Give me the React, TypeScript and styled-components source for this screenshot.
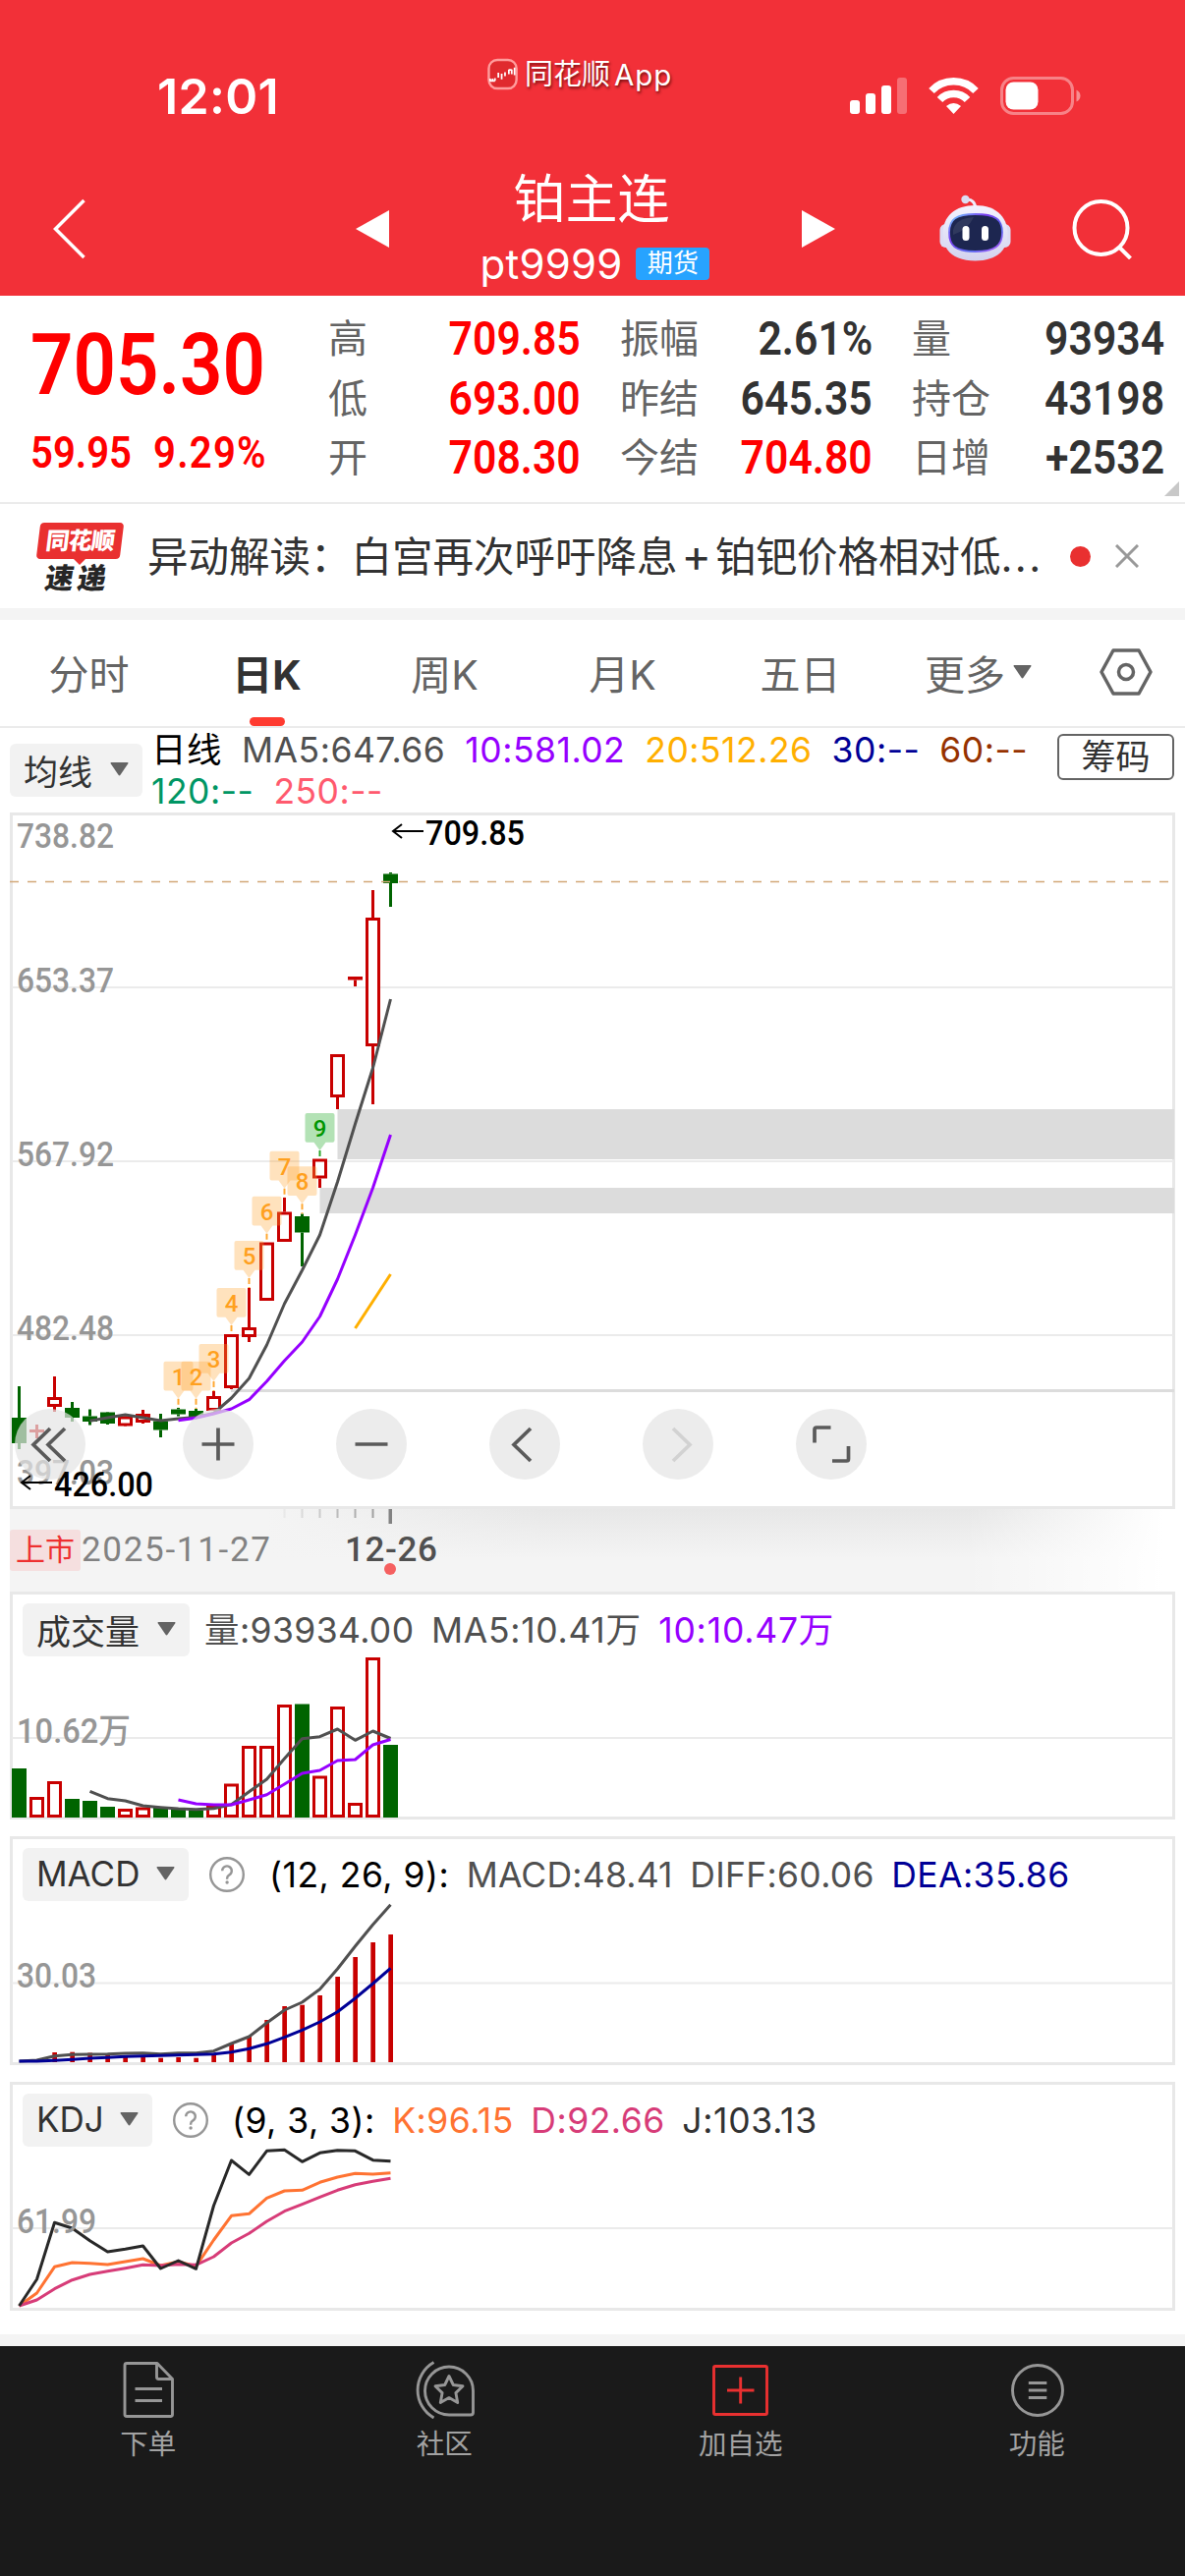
import React from 'react';
import styled, { createGlobalStyle, css } from 'styled-components';

const SANS = `Inter, "Noto Sans CJK SC", sans-serif`;
const DIN = `Roboto, "Noto Sans CJK SC", sans-serif`;
const RED = '#c80000';
const GREEN = '#006400';

const Global = createGlobalStyle`
  html, body { margin: 0; padding: 0; background: #fff; }
  body { font-family: ${SANS}; }
  * { box-sizing: border-box; }
`;

const Screen = styled.div`
  width: 1206px;
  height: 2622px;
  display: flex;
  flex-direction: column;
  background: #fff;
  overflow: hidden;
  white-space: nowrap;
`;

/* ---------- header ---------- */

const Header = styled.header`
  height: 301px;
  flex: none;
  background: #f23038;
  color: #fff;
`;

const StatusBar = styled.div`
  height: 164px;
  display: grid;
  grid-template-columns: 496px 188px 1fr;
  align-items: start;
`;

const Clock = styled.div`
  padding: 73px 0 0 160px;
  font-size: 50px;
  line-height: 50px;
  font-weight: 600;
  letter-spacing: 0.3px;
`;

const AppMark = styled.div`
  display: flex;
  align-items: center;
  gap: 7px;
  padding-top: 58px;
  font-size: 29px;
  line-height: 36px;
  text-shadow: 1px 2px 3px rgba(70, 0, 0, 0.75);
`;

const AppLatin = styled.span`
  margin-left: -3px;
  font-size: 29.5px;
  letter-spacing: 0.8px;
`;

const StatusIcons = styled.div`
  display: flex;
  align-items: center;
  gap: 22px;
  padding: 78px 0 0 181px;
`;

const NavBar = styled.div`
  height: 137px;
  display: grid;
  grid-template-columns: 362px 34px 414px 40px 1fr;
  align-items: center;
`;

const NavBack = styled.div`
  padding-left: 53px;
  line-height: 0;
`;

const NavArrow = styled.div`
  line-height: 0;
  justify-self: end;
`;

const NavTitle = styled.div`
  display: flex;
  flex-direction: column;
  align-items: center;
`;

const TitleText = styled.div`
  font-size: 53px;
  line-height: 70px;
  padding-right: 2px;
  font-weight: 400;
`;

const TitleSub = styled.div`
  display: flex;
  align-items: center;
  gap: 14px;
  padding: 2px 0 0 5px;
  font-size: 42px;
  line-height: 58px;
  letter-spacing: 0.2px;
`;

const MarketTag = styled.span`
  width: 75px;
  height: 33px;
  border-radius: 4px;
  background: #27a3ff;
  font-size: 26px;
  line-height: 32px;
  text-align: center;
`;

const NavActions = styled.div`
  display: flex;
  align-items: center;
  gap: 61px;
  padding-left: 105px;
`;

/* ---------- quote ---------- */

const Quote = styled.section`
  height: 212px;
  flex: none;
  display: flex;
  border-bottom: 2px solid #ebebeb;
  position: relative;
`;

const Num = styled.span<{ $color?: string; $origin?: string; $track?: number }>`
  display: inline-block;
  font-family: ${DIN};
  font-weight: 600;
  letter-spacing: ${p => p.$track ?? 0}px;
  color: ${p => p.$color ?? '#323232'};
  transform: scaleX(0.89);
  transform-origin: ${p => p.$origin ?? 'right'} center;
`;

const PriceBlock = styled.div`
  width: 334px;
  padding: 22px 0 0 31px;
`;

const Price = styled(Num)`
  display: block;
  font-size: 87px;
  line-height: 96px;
  transform: scaleX(0.875);
`;

const Changes = styled.div`
  display: flex;
  gap: 9px;
  margin-top: 15px;
  font-size: 45px;
  line-height: 54px;
`;

const Stats = styled.div`
  flex: 1;
  display: grid;
  grid-template-columns: repeat(3, 257px);
  grid-auto-rows: 60.5px;
  column-gap: 40px;
  padding-top: 14px;
`;

const Stat = styled.div`
  display: flex;
  justify-content: space-between;
  align-items: center;
  font-size: 48px;
  line-height: 60px;
`;

const StatLabel = styled.span`
  font-size: 40px;
  color: #646464;
`;

const Corner = styled.svg`
  position: absolute;
  right: 6px;
  bottom: 6px;
`;

/* ---------- news ---------- */

const News = styled.section`
  height: 106px;
  flex: none;
  display: flex;
  align-items: center;
`;

const NewsLogo = styled.div`
  width: 88px;
  margin: 2px 25px 0 37px;
  display: flex;
  flex-direction: column;
  align-items: center;
`;

const LogoTop = styled.div`
  width: 85px;
  height: 37px;
  border-radius: 4px;
  background: #e93030;
  color: #fff;
  font-size: 24px;
  line-height: 37px;
  font-weight: 900;
  letter-spacing: -0.8px;
  text-align: center;
  transform: skewX(-7deg);
`;

const LogoPointer = styled.div`
  border: 6px solid transparent;
  border-top-color: #e93030;
  border-bottom: 0;
`;

const LogoBottom = styled.div`
  font-size: 29px;
  line-height: 28px;
  font-weight: 900;
  color: #262626;
  letter-spacing: 4px;
  margin-right: 4px;
  transform: skewX(-9deg);
`;

const NewsText = styled.div`
  width: 912px;
  font-size: 41.5px;
  color: #323232;
  line-height: 60px;
`;

const Plus = styled.span`
  padding: 0 4px 0 4px;
  font-size: 46px;
`;

const Ellipsis = styled.span`
  letter-spacing: 2.4px;
`;

const Dot = styled.i`
  width: 21px;
  height: 21px;
  border-radius: 50%;
  background: #e93030;
  margin: 0 25px 0 27px;
`;

const Strip = styled.div`
  height: 12px;
  flex: none;
  background: #f4f4f4;
`;

/* ---------- tabs ---------- */

const Tabs = styled.nav`
  height: 110px;
  flex: none;
  display: grid;
  grid-template-columns: repeat(6, 181px) 120px;
  border-bottom: 2px solid #ebebeb;
`;

const Tab = styled.div<{ $active?: boolean }>`
  display: flex;
  align-items: center;
  justify-content: center;
  gap: 8px;
  padding-bottom: 2px;
  position: relative;
  font-size: 41px;
  color: #646464;
  ${p => p.$active && css`
    color: #323232;
    font-weight: 700;
    &::after {
      content: '';
      position: absolute;
      bottom: 0;
      width: 36px;
      height: 9px;
      border-radius: 5px;
      background: #ff3b30;
    }
  `}
`;

/* ---------- moving averages ---------- */

const Averages = styled.section`
  height: 86px;
  flex: none;
  display: flex;
  align-items: flex-start;
  padding: 0 11px 0 10px;
`;

const Picker = styled.div<{ $w: number }>`
  width: ${p => p.$w}px;
  height: 54px;
  flex: none;
  display: flex;
  align-items: center;
  justify-content: space-between;
  padding: 0 14px 2px 14px;
  border-radius: 6px;
  background: #f2f2f2;
  font-size: 35px;
  color: #323232;
`;

const PickerSlot = styled.div`
  padding-top: 16px;
`;

const AverageList = styled.div`
  flex: 1;
  display: flex;
  flex-wrap: wrap;
  column-gap: 20px;
  padding: 2px 0 0 9px;
`;

const Value = styled.span<{ $color: string; $track?: number }>`
  color: ${p => p.$color};
  font-size: 35.5px;
  line-height: 42px;
  letter-spacing: ${p => p.$track ?? 0.5}px;
`;

const ChipButton = styled.div`
  width: 119px;
  height: 47px;
  margin-top: 6px;
  border: 2px solid #646464;
  border-radius: 6px;
  font-size: 35px;
  line-height: 42px;
  text-align: center;
  color: #323232;
`;

/* ---------- charts ---------- */

const Panel = styled.section<{ $h: number; $gap?: number }>`
  height: ${p => p.$h}px;
  flex: none;
  display: grid;
  margin: ${p => p.$gap ?? 0}px 10px 0;
  border: 3px solid #e8e8e8;
  position: relative;
`;

const Plot = styled.svg`
  grid-area: 1 / 1;
  display: block;
  margin: -3px;
  font-family: ${DIN};
  font-weight: 500;
`;

const PanelHead = styled.div`
  grid-area: 1 / 1;
  align-self: start;
  z-index: 1;
  display: flex;
  align-items: center;
  padding: 9px 0 0 10px;
`;

const Help = styled.svg`
  flex: none;
  margin: 0 23px 0 20px;
`;

const Values = styled.div<{ $left?: number }>`
  display: flex;
  gap: 17.5px;
  padding: 2px 0 0 ${p => p.$left ?? 0}px;
`;

const Toolbar = styled.div`
  position: absolute;
  left: 2px;
  top: 604px;
  display: flex;
  gap: 84px;
`;

const Round = styled.div`
  width: 72px;
  height: 72px;
  border-radius: 50%;
  background: rgba(228, 228, 228, 0.7);
  line-height: 0;
  &:first-child { margin-right: 15px; }
`;

const LowMark = styled.svg`
  position: absolute;
  left: 6px;
  top: 654px;
  font-family: ${DIN};
  font-weight: 500;
`;

const DateStrip = styled.div`
  height: 84px;
  flex: none;
  margin: 0 10px;
  display: flex;
  align-items: center;
  position: relative;
  background:
    linear-gradient(90deg, rgba(255,255,255,0) 0 82%, #fff 99%),
    linear-gradient(90deg, #f4f4f4 0 22%, rgba(244,244,244,0) 46%),
    linear-gradient(180deg, #e7e7e7 0%, #f4f4f4 60%);
  font-family: ${DIN};
`;

const ListTag = styled.span`
  width: 72px;
  height: 42px;
  border-radius: 3px;
  background: #f5dfdf;
  color: #ee3030;
  font-size: 30px;
  line-height: 42px;
  text-align: center;
`;

const StartDate = styled.span`
  width: 269px;
  padding: 0 0 2px 1px;
  font-size: 35px;
  color: #828282;
  letter-spacing: 1.7px;
`;

const EndDate = styled.span`
  padding-bottom: 2px;
  font-size: 35px;
  font-weight: 500;
  letter-spacing: 0.6px;
  color: #505050;
`;

const Ticks = styled.svg`
  position: absolute;
  left: 0;
  top: 0;
`;

/* ---------- bottom bar ---------- */

const Spacer = styled.div`
  flex: 1;
`;

const Footer = styled.footer`
  height: 234px;
  flex: none;
  display: grid;
  grid-template-columns: repeat(4, 301.5px);
  align-items: start;
  padding-top: 12px;
  background: #1a1a1a;
`;

const FootItem = styled.div`
  display: flex;
  flex-direction: column;
  align-items: center;
  gap: 5px;
  font-size: 28.5px;
  line-height: 42px;
  color: #a2a2a2;
`;

/* ---------- data ---------- */

const px = (i: number) => 19.5 + 18 * i;

type Candle = [up: number, high: number, top: number, bottom: number, low: number];

const CANDLES: Candle[] = [
  [0, 1411, 1443, 1469, 1475], [1, 1450, 1455, 1458, 1464], [1, 1401, 1422, 1432, 1437],
  [0, 1427, 1433, 1443, 1447], [0, 1434.5, 1441.5, 1447, 1450.5], [0, 1437, 1437.5, 1449, 1450],
  [1, 1441, 1441.5, 1451.5, 1452], [1, 1435, 1439, 1448, 1449], [0, 1439, 1446.5, 1455.5, 1463],
  [0, 1433, 1434.5, 1439.5, 1441.5], [0, 1434, 1436, 1443, 1443], [1, 1416, 1421, 1436, 1436],
  [1, 1358, 1358, 1413, 1414], [1, 1311, 1351, 1361, 1366], [1, 1264.5, 1264.5, 1324, 1324],
  [1, 1219, 1233.5, 1264, 1264], [0, 1235.5, 1238, 1254.5, 1289], [1, 1179.5, 1179.5, 1199.5, 1209],
  [1, 1073, 1073, 1117, 1129], [1, 994, 994, 997.5, 1004], [1, 906, 934, 1065, 1124], [0, 888, 889.5, 899, 923],
];

const MA5 = [1446.3, 1443, 1440, 1443, 1446, 1444, 1442.5, 1438.5, 1423, 1403, 1369, 1327, 1293, 1257, 1203, 1144, 1087, 1017];
const MA10 = [1445.7, 1443.3, 1439, 1434, 1424.7, 1406, 1385, 1366, 1340, 1302, 1257, 1209, 1155];

const VOL = [1800, 1829, 1813, 1831, 1833, 1839, 1841, 1839.5, 1840, 1840, 1842.5, 1837, 1815.5, 1777, 1777, 1735, 1734.5, 1807.5, 1737, 1835, 1687, 1776];
const VOL5 = [1823.3, 1830.7, 1833, 1838, 1839.7, 1841, 1841.7, 1840.7, 1836.7, 1823.7, 1811, 1790, 1769.7, 1767.7, 1760, 1771.3, 1762, 1769.5];
const VOL10 = [1832, 1836, 1837, 1837, 1832, 1826.7, 1816, 1805, 1802, 1792, 1791, 1776, 1770.5];

const HIST = [2098, 2098, 2089, 2088.7, 2089.5, 2092, 2092, 2092.7, 2094.7, 2094, 2094.7, 2091, 2080, 2073, 2056, 2042, 2040.7, 2031, 2012, 1992, 1977, 1969];
const DIFF = [2098, 2097, 2092.7, 2091.2, 2091, 2090.7, 2090, 2089.7, 2090.7, 2089.7, 2089.7, 2087.7, 2080, 2073, 2059, 2046, 2038, 2024.7, 2004, 1981, 1959, 1938.7];
const DEA = [2098, 2098, 2097.3, 2096.3, 2095, 2094.3, 2093.3, 2092.7, 2092.3, 2091.7, 2091.3, 2090.7, 2088.7, 2085.3, 2080.3, 2073.7, 2066.3, 2058, 2047.7, 2034, 2019, 2003.3];

const J = [2347, 2320, 2262.3, 2268, 2280.7, 2292, 2289.3, 2286, 2309, 2301, 2309.3, 2245, 2199, 2213.3, 2189.3, 2188.3, 2200.3, 2191.3, 2188.7, 2189.3, 2198.7, 2199.7];
const K = [2347, 2334, 2307.3, 2303, 2303.7, 2305, 2302, 2299, 2306, 2302, 2306.7, 2280, 2255.3, 2253.3, 2237.3, 2230, 2229.3, 2221.3, 2216, 2212.3, 2213, 2211.7];
const D = [2347, 2341, 2329.7, 2320.7, 2315, 2311.7, 2308.7, 2305.3, 2306, 2304.7, 2305.3, 2297, 2283, 2273.3, 2261, 2250.7, 2243.7, 2236.3, 2229.3, 2223.7, 2220.3, 2217.3];

const BADGES = [
  { n: 1, i: 9, y: 1385.7 }, { n: 2, i: 10, y: 1385.7 }, { n: 3, i: 11, y: 1368 },
  { n: 4, i: 12, y: 1311 }, { n: 5, i: 13, y: 1263 }, { n: 6, i: 14, y: 1217.7 },
  { n: 7, i: 15, y: 1171.7 }, { n: 8, i: 16, y: 1187.3 }, { n: 9, i: 17, y: 1133 },
];

/* ---------- drawing helpers ---------- */

const Line = ({ data, from = 0, color }: { data: number[]; from?: number; color: string }) => (
  <polyline
    points={data.map((y, k) => `${px(k + from)},${y}`).join(' ')}
    fill="none" stroke={color} strokeWidth={3} strokeLinejoin="round"
  />
);

const Grid = ({ y }: { y: number }) => <rect x={12} y={y - 1} width={1182} height={2} fill="#ebebeb" />;

const Axis = ({ y, w, children }: { y: number; w: number; children: string }) => (
  <text x={17} y={y} fontSize={35.5} fill="#969696" textLength={w} lengthAdjust="spacingAndGlyphs">{children}</text>
);

const Caret = ({ color = '#646464' }: { color?: string }) => (
  <svg width="19" height="14" viewBox="0 0 19 14"><path d="M1.2 0h16.600q1.200 0 .5 1.200L10.500 12.800q-1 1.400-2 0L.7 1.200Q0 0 1.200 0z" fill={color} /></svg>
);

const CandleShape = ({ c, i }: { c: Candle; i: number }) => {
  const [up, high, top, bottom, low] = c;
  const x = px(i);
  const color = up ? RED : GREEN;
  return (
    <g fill={color}>
      <rect x={x - 1.5} y={high} width={3} height={Math.max(0, top - high)} />
      <rect x={x - 1.5} y={bottom} width={3} height={Math.max(0, low - bottom)} />
      {up && bottom - top > 5
        ? <rect x={x - 6} y={top + 1.5} width={12} height={bottom - top - 3} fill="#fff" stroke={color} strokeWidth={3} />
        : <rect x={x - 7.5} y={top} width={15} height={bottom - top} />}
    </g>
  );
};

const Badge = ({ n, i, y }: { n: number; i: number; y: number }) => {
  const x = px(i);
  const hot = n === 9;
  return (
    <g>
      <line x1={x} x2={x} y1={y + 38} y2={Math.max(y + 38, CANDLES[i][1])} stroke={hot ? '#2ba52b' : '#ffa832'} strokeWidth={2} strokeDasharray="6 3" />
      <path
        d={`M${x - 13} ${y}h26a2 2 0 0 1 2 2v25.700a2 2 0 0 1-2 2h-7L${x} ${y + 38}L${x - 6} ${y + 29.7}h-7a2 2 0 0 1-2-2V${y + 2}a2 2 0 0 1 2-2z`}
        fill={hot ? '#b3e2b5' : 'rgba(255,165,50,0.32)'}
      />
      <text x={x} y={y + 24} fontSize={24} textAnchor="middle" fill={hot ? '#009600' : '#ffa01e'}>{n}</text>
    </g>
  );
};

const Arrow = ({ x, y }: { x: number; y: number }) => (
  <path d={`M${x} ${y}h31M${x + 9} ${y - 7}L${x} ${y}l9 7`} fill="none" stroke="#000" strokeWidth={2} />
);

const HelpIcon = () => (
  <Help width="38" height="38" viewBox="0 0 38 38">
    <circle cx="19" cy="19" r="16.800" fill="none" stroke="#969696" strokeWidth="2.400" />
    <path d="M14.2 15.200a4.800 4.800 0 1 1 7.200 4.200q-2.300 1.300-2.300 3.600v.8" fill="none" stroke="#969696" strokeWidth="2.400" />
    <circle cx="19.100" cy="27" r="1.700" fill="#969696" />
  </Help>
);

const TOOLS: { d: string; color?: string }[] = [
  { d: 'M36 20L19 36.500L36 53M51 20L34 36.500L51 53' },
  { d: 'M19.500 36h33M36 19.500v33' },
  { d: 'M19.500 36h33' },
  { d: 'M42 20L25 36.500L42 53' },
  { d: 'M31 20L48 36.500L31 53', color: '#d2d2d2' },
  { d: 'M35.500 19H21q-2 0-2 2v13.500M37 53h14.500q2 0 2-2V38' },
];

const STATS: [string, string, string?][] = [
  ['高', '709.85', '#f00'], ['振幅', '2.61%'], ['量', '93934'],
  ['低', '693.00', '#f00'], ['昨结', '645.35'], ['持仓', '43198'],
  ['开', '708.30', '#f00'], ['今结', '704.80', '#f00'], ['日增', '+2532'],
];

const AVERAGES: [string, string][] = [
  ['日线', '#000'], ['MA5:647.66', '#505050'], ['10:581.02', '#9600ff'], ['20:512.26', '#ffaf00'],
  ['30:--', '#000096'], ['60:--', '#963200'], ['120:--', '#009664'], ['250:--', '#ff5a6e'],
];

const TABS = ['分时', '日K', '周K', '月K', '五日', '更多'];

const FOOT = [
  {
    label: '下单', color: '#969696',
    icon: <><path d="M9 5.500h31l15.500 16v36q0 2-2 2H9q-2 0-2-2v-50q0-2 2-2z" /><path d="M39.500 6v13.500q0 2 2 2h13.500M17.500 31.500h27.500M17.500 43.500h27.500" /></>,
  },
  {
    label: '社区', color: '#969696',
    icon: <><path d="M36 9A24.500 24.500 0 0 0 36 58H58q2.500 0 2.500-2.500V33.500A24.500 24.500 0 0 0 36 9z" /><path d="M20.500 4.500A32.500 32.500 0 0 0 20.500 61" /><path d="M36 18.500l4.300 9 9.700 1.300-7.100 6.800 1.800 9.900-8.700-4.900-8.700 4.900 1.800-9.900-7.100-6.800 9.700-1.300z" /></>,
  },
  {
    label: '加自选', color: '#e93030',
    icon: <><rect x="3.500" y="8.500" width="54" height="49" rx="1.500" /><path d="M17 33h27.500M30.700 19.500v27" /></>,
  },
  {
    label: '功能', color: '#969696',
    icon: <><circle cx="32" cy="33" r="25.500" /><path d="M22.800 25.500h18.500M22.800 33h18.500M22.800 40.500h18.500" /></>,
  },
];

/* ---------- icons in the header ---------- */

const Robot = () => (
  <svg width="75" height="70" viewBox="0 0 75 70">
    <defs>
      <linearGradient id="shell" x1="0" y1="0" x2="0" y2="1">
        <stop offset="0" stopColor="#f4f3ff" /><stop offset="1" stopColor="#d3d2ee" />
      </linearGradient>
      <linearGradient id="rim" x1="0" y1="0" x2="1" y2="1">
        <stop offset="0" stopColor="#6fd8ff" /><stop offset=".35" stopColor="#7a3cf0" /><stop offset=".7" stopColor="#5a6cf0" /><stop offset="1" stopColor="#c050ff" />
      </linearGradient>
    </defs>
    <path d="M28 5.500Q37 4 38 15" fill="none" stroke="#eeeefc" strokeWidth="3" />
    <circle cx="27.500" cy="5" r="4.200" fill="#dcdcf2" />
    <rect x="1.500" y="30" width="14" height="24" rx="6" fill="#dcdcf4" />
    <rect x="59.500" y="30" width="14" height="24" rx="6" fill="#dcdcf4" />
    <path d="M37.500 11C58 11 70.500 22 70.500 40S58 67.500 37.500 67.500 4.500 58 4.500 40 17 11 37.500 11z" fill="url(#shell)" />
    <path d="M37.500 20C58 20 65 25 65 38.500S58 58 37.500 58 11 52 11 38.500 18 20 37.500 20z" fill="#1d2650" stroke="url(#rim)" strokeWidth="1.800" />
    <path d="M15 36Q18 24 36 23Q30 36 15 41z" fill="#3d4668" opacity=".6" />
    <rect x="24.500" y="32" width="7" height="15" rx="3.500" fill="#fff" />
    <rect x="44" y="32" width="7" height="15" rx="3.500" fill="#fff" />
  </svg>
);

const StatusGlyphs = () => (
  <StatusIcons>
    <svg width="58" height="39" viewBox="0 0 58 39" fill="#fff">
      <rect x="0" y="24" width="10" height="14" rx="3" />
      <rect x="16" y="17" width="10" height="21" rx="3" />
      <rect x="32" y="9" width="10" height="29" rx="3" />
      <rect x="48" y="1" width="10" height="37" rx="3" opacity=".3" />
    </svg>
    <svg width="51" height="39" viewBox="0 0 51 39" fill="none" stroke="#fff" strokeWidth="7.500">
      <path d="M3 14.500Q12 4.800 25.500 4.800T48 14.500" />
      <path d="M11.500 23.500Q17 17.500 25.500 17.500T39.500 23.500" />
      <path d="M25.500 38l-7.500-8q7.500-6 15 0z" fill="#fff" stroke="none" />
    </svg>
    <svg width="82" height="39" viewBox="0 0 82 39">
      <rect x="1.500" y="1.500" width="72" height="36" rx="12" fill="none" stroke="#fff" strokeOpacity=".4" strokeWidth="3" />
      <rect x="5.500" y="5.500" width="33" height="28" rx="8" fill="#fff" />
      <path d="M77.500 13.500q4 2 4 6t-4 6z" fill="#fff" opacity=".45" />
    </svg>
  </StatusIcons>
);

/* ---------- screen ---------- */

export default function App() {
  return (
    <Screen>
      <Global />
      <Header>
        <StatusBar>
          <Clock>12:01</Clock>
          <AppMark>
            <svg width="32" height="34" viewBox="0 0 32 34">
              <rect x="1.500" y="1.500" width="29" height="30" rx="9" fill="#e02a2e" stroke="#ff9c9c" strokeWidth="2.500" />
              <path d="M3 21v3M5.500 21v3M8 20.500v3M11.500 15v5M15 16v6M18.500 14.500v4M22.500 11.500v5M25.500 11.500v5M28.500 9.500v8M3 23.500h5M22.500 12h3" stroke="#fff" strokeWidth="1.800" />
            </svg>
            同花顺<AppLatin>App</AppLatin>
          </AppMark>
          <StatusGlyphs />
        </StatusBar>
        <NavBar>
          <NavBack>
            <svg width="34" height="62" viewBox="0 0 34 62"><path d="M32.500 2L3.500 31l29 29" fill="none" stroke="#fff" strokeWidth="3.500" /></svg>
          </NavBack>
          <NavArrow><svg width="34" height="38" viewBox="0 0 34 38"><path d="M34 0v38L0 19z" fill="#fff" /></svg></NavArrow>
          <NavTitle>
            <TitleText>铂主连</TitleText>
            <TitleSub>pt9999<MarketTag>期货</MarketTag></TitleSub>
          </NavTitle>
          <NavArrow><svg width="34" height="38" viewBox="0 0 34 38"><path d="M0 0v38L34 19z" fill="#fff" /></svg></NavArrow>
          <NavActions>
            <Robot />
            <svg width="62" height="62" viewBox="0 0 62 62" fill="none" stroke="#fff" strokeWidth="4">
              <circle cx="29.500" cy="30" r="27" /><path d="M48.500 50l11 11" />
            </svg>
          </NavActions>
        </NavBar>
      </Header>

      <Quote>
        <PriceBlock>
          <Price $color="#f00" $origin="left">705.30</Price>
          <Changes>
            <Num $color="#f00" $origin="left">59.95</Num>
            <Num $color="#f00" $origin="left" $track={1.4}>9.29%</Num>
          </Changes>
        </PriceBlock>
        <Stats>
          {STATS.map(([label, value, color]) => (
            <Stat key={label}><StatLabel>{label}</StatLabel><Num $color={color}>{value}</Num></Stat>
          ))}
        </Stats>
        <Corner width="15" height="15" viewBox="0 0 15 15"><path d="M15 0v15H0z" fill="#c8c8c8" /></Corner>
      </Quote>

      <News>
        <NewsLogo>
          <LogoTop>同花顺</LogoTop>
          <LogoPointer />
          <LogoBottom>速递</LogoBottom>
        </NewsLogo>
        <NewsText>异动解读：白宫再次呼吁降息<Plus>+</Plus>铂钯价格相对低<Ellipsis>...</Ellipsis></NewsText>
        <Dot />
        <svg width="24" height="24" viewBox="0 0 24 24"><path d="M1 1l22 22M23 1L1 23" stroke="#999" strokeWidth="3" /></svg>
      </News>
      <Strip />

      <Tabs>
        {TABS.map((t, i) => (
          <Tab key={t} $active={i === 1}>{t}{i === 5 && <Caret />}</Tab>
        ))}
        <Tab>
          <svg width="54" height="48" viewBox="0 0 54 48" fill="none" stroke="#646464" strokeWidth="3.500" strokeLinejoin="round">
            <path d="M14 2h26l12 22-12 22H14L2 24z" /><circle cx="27" cy="24" r="7.500" />
          </svg>
        </Tab>
      </Tabs>

      <Averages>
        <PickerSlot><Picker $w={135}>均线<Caret /></Picker></PickerSlot>
        <AverageList>
          {AVERAGES.map(([t, c]) => <Value key={t} $color={c}>{t}</Value>)}
        </AverageList>
        <ChipButton>筹码</ChipButton>
      </Averages>

      <Panel $h={709}>
        <Plot width="1186" height="709" viewBox="10 827 1186 709">
          <Grid y={1005} /><Grid y={1182} /><Grid y={1359} />
          <g fill="#dcdcdc">
            <rect x={343.5} y={1129} width={851.5} height={51} />
            <rect x={325.5} y={1209} width={869.5} height={26} />
            <rect x={235} y={1414} width={960} height={3} />
          </g>
          <Axis y={862.5} w={99}>738.82</Axis>
          <Axis y={1009.5} w={99}>653.37</Axis>
          <Axis y={1186.5} w={99}>567.92</Axis>
          <Axis y={1363.5} w={99}>482.48</Axis>
          <Axis y={1510.5} w={99}>397.03</Axis>
          {CANDLES.map((c, i) => <CandleShape key={i} c={c} i={i} />)}
          <line x1={10} x2={1196} y1={897.5} y2={897.5} stroke="#d2a878" strokeWidth={1.6} strokeDasharray="9 9" />
          {BADGES.map(b => <Badge key={b.n} {...b} />)}
          <Line data={MA5} from={4} color="#505050" />
          <Line data={MA10} from={9} color="#9600ff" />
          <path d="M361.500 1352L397.500 1297" stroke="#ffaf00" strokeWidth="3" />
          <Arrow x={400} y={846} />
          <text x={433} y={860} fontSize={35.5} textLength={101} lengthAdjust="spacingAndGlyphs">709.85</text>
        </Plot>
        <Toolbar>
          {TOOLS.map((t, i) => (
            <Round key={i}>
              <svg width="72" height="72" viewBox="0 0 72 72" fill="none" stroke={t.color ?? '#5a5a5a'} strokeWidth="3.700"><path d={t.d} /></svg>
            </Round>
          ))}
        </Toolbar>
        <LowMark width="146" height="48" viewBox="19 1484 146 48">
          <Arrow x={22} y={1509} />
          <text x={55} y={1523} fontSize={35.5} textLength={101} lengthAdjust="spacingAndGlyphs">426.00</text>
        </LowMark>
      </Panel>

      <DateStrip>
        <ListTag>上市</ListTag>
        <StartDate>2025-11-27</StartDate>
        <EndDate>12-26</EndDate>
        <Ticks width="420" height="84" viewBox="10 1536 420 84">
          {[15, 16, 17, 18, 19, 20].map((i, k) => (
            <rect key={i} x={px(i) - 1} y={1536} width={2} height={9} fill="#8c8c8c" opacity={0.1 + k * 0.14} />
          ))}
          <rect x={395.5} y={1536} width={3.5} height={15} fill="#828282" />
          <circle cx={397} cy={1597} r={6} fill="#f56060" />
        </Ticks>
      </DateStrip>

      <Panel $h={232}>
        <Plot width="1186" height="232" viewBox="10 1620 1186 232">
          <Grid y={1769} />
          <Axis y={1773.5} w={116}>10.62万</Axis>
          {VOL.map((y, i) => CANDLES[i][0]
            ? <rect key={i} x={px(i) - 6} y={y + 1.5} width={12} height={1850 - y - 3} fill="#fff" stroke={RED} strokeWidth={3} />
            : <rect key={i} x={px(i) - 7.5} y={y} width={15} height={1850 - y} fill={GREEN} />)}
          <Line data={VOL5} from={4} color="#505050" />
          <Line data={VOL10} from={9} color="#9600ff" />
        </Plot>
        <PanelHead>
          <Picker $w={170}>成交量<Caret /></Picker>
          <Values $left={15}>
            <Value $color="#505050" $track={0.4}>量:93934.00</Value>
            <Value $color="#505050" $track={0.7}>MA5:10.41万</Value>
            <Value $color="#9600ff" $track={0.8}>10:10.47万</Value>
          </Values>
        </PanelHead>
      </Panel>

      <Panel $h={233} $gap={17}>
        <Plot width="1186" height="233" viewBox="10 1869 1186 233">
          <Grid y={2018.5} />
          <Axis y={2022.5} w={81}>30.03</Axis>
          {HIST.map((y, i) => y < 2098 && <rect key={i} x={px(i) - 2.2} y={y} width={4.7} height={2099 - y} fill={RED} />)}
          <Line data={DIFF} color="#505050" />
          <Line data={DEA} color="#000096" />
        </Plot>
        <PanelHead>
          <Picker $w={169}>MACD<Caret /></Picker>
          <HelpIcon />
          <Values $left={1}>
            <Value $color="#000">(12, 26, 9):</Value>
            <Value $color="#505050" $track={0.2}>MACD:48.41</Value>
            <Value $color="#505050" $track={0.3}>DIFF:60.06</Value>
            <Value $color="#000096" $track={0.4}>DEA:35.86</Value>
          </Values>
        </PanelHead>
      </Panel>

      <Panel $h={233} $gap={17}>
        <Plot width="1186" height="233" viewBox="10 2119 1186 233">
          <Grid y={2268} />
          <Line data={K} color="#ff7332" />
          <Line data={D} color="#d73c78" />
          <Line data={J} color="#282828" />
          <Axis y={2272.5} w={81}>61.99</Axis>
        </Plot>
        <PanelHead>
          <Picker $w={132}>KDJ<Caret /></Picker>
          <HelpIcon />
          <Values $left={0}>
            <Value $color="#000">(9, 3, 3):</Value>
            <Value $color="#ff7332">K:96.15</Value>
            <Value $color="#d73c78">D:92.66</Value>
            <Value $color="#323232" $track={0.7}>J:103.13</Value>
          </Values>
        </PanelHead>
      </Panel>

      <Spacer />
      <Strip />
      <Footer>
        {FOOT.map(f => (
          <FootItem key={f.label}>
            <svg width="62" height="62" viewBox="0 0 62 62" fill="none" stroke={f.color} strokeWidth="2.900" strokeLinejoin="round">{f.icon}</svg>
            {f.label}
          </FootItem>
        ))}
      </Footer>
    </Screen>
  );
}
